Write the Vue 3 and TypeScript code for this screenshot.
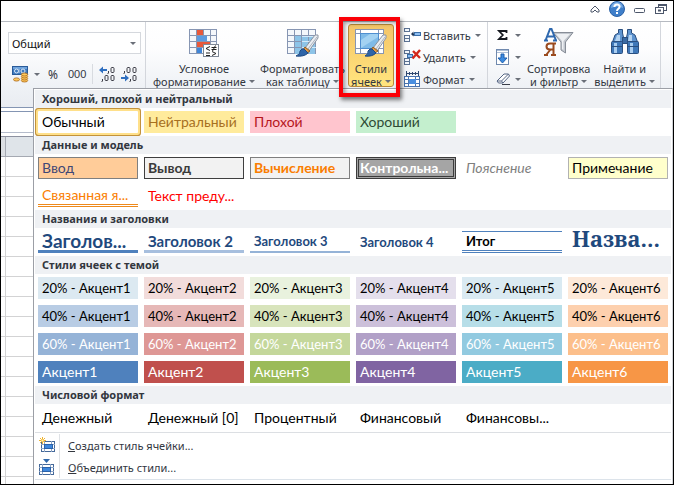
<script setup lang="ts">
interface StyleCell {
  label: string
  kind: string
}

interface StyleGroup {
  title: string
  cells: StyleCell[]
}

const accents = [1, 2, 3, 4, 5, 6]

const accentRow = (prefix: string, tint: string): StyleCell[] =>
  accents.map((n) => ({ label: `${prefix}Акцент${n}`, kind: `accent${n} ${tint}` }))

const groups: StyleGroup[] = [
  {
    title: 'Хороший, плохой и нейтральный',
    cells: [
      { label: 'Обычный', kind: 'selected' },
      { label: 'Нейтральный', kind: 'neutral' },
      { label: 'Плохой', kind: 'bad' },
      { label: 'Хороший', kind: 'good' },
    ],
  },
  {
    title: 'Данные и модель',
    cells: [
      { label: 'Ввод', kind: 'input' },
      { label: 'Вывод', kind: 'output' },
      { label: 'Вычисление', kind: 'calc' },
      { label: 'Контрольна...', kind: 'check' },
      { label: 'Пояснение', kind: 'explain' },
      { label: 'Примечание', kind: 'note' },
      { label: 'Связанная я...', kind: 'linked' },
      { label: 'Текст преду...', kind: 'warning' },
    ],
  },
  {
    title: 'Названия и заголовки',
    cells: [
      { label: 'Заголов...', kind: 'heading h1' },
      { label: 'Заголовок 2', kind: 'heading h2' },
      { label: 'Заголовок 3', kind: 'heading h3' },
      { label: 'Заголовок 4', kind: 'heading h4' },
      { label: 'Итог', kind: 'total' },
      { label: 'Назва...', kind: 'title' },
    ],
  },
  {
    title: 'Стили ячеек с темой',
    cells: [
      ...accentRow('20% - ', 'tint20'),
      ...accentRow('40% - ', 'tint40'),
      ...accentRow('60% - ', 'tint60'),
      ...accentRow('', 'tint100'),
    ],
  },
  {
    title: 'Числовой формат',
    cells: [
      { label: 'Денежный', kind: 'plain' },
      { label: 'Денежный [0]', kind: 'plain' },
      { label: 'Процентный', kind: 'plain' },
      { label: 'Финансовый', kind: 'plain' },
      { label: 'Финансовы...', kind: 'plain' },
    ],
  },
]
</script>

<template>
  <div class="window">
    <header class="titlebar">
      <button class="bare" aria-label="Свернуть ленту">
        <svg width="10" height="10" viewBox="0 0 10 10">
          <path d="M1 6 L5 2 L9 6 L9 8 H7 L5 6 L3 8 H1 Z" fill="#fff" stroke="#4c566a" />
        </svg>
      </button>
      <button class="bare" aria-label="Справка">
        <svg width="16" height="16" viewBox="0 0 16 16">
          <circle cx="8" cy="8" r="7.5" fill="#3f7fca" stroke="#2c62a6" />
          <path d="M2 7 A6 6 0 0 1 14 7 Q8 4 2 7Z" fill="#76aae4" />
          <path d="M5.4 6 C5.4 2.6 10.6 2.6 10.6 5.8 C10.6 7.8 8 7.8 8 10" fill="none" stroke="#fff" stroke-width="2" />
          <rect x="7" y="11" width="2" height="2" fill="#fff" />
        </svg>
      </button>
      <button class="bare" aria-label="Свернуть окно">
        <svg width="12" height="12" viewBox="0 0 12 12">
          <rect x="0.5" y="5.5" width="10" height="4" rx="1" fill="#fff" stroke="#4c566a" />
        </svg>
      </button>
      <button class="bare" aria-label="Восстановить окно">
        <svg width="12" height="12" viewBox="0 0 12 12" fill="#fff" stroke="#4c566a">
          <rect x="3.5" y="1.5" width="8" height="6" />
          <path d="M3 2.5 H12" />
          <rect x="0.5" y="4.5" width="8" height="6" />
          <rect x="3.5" y="7" width="2" height="1" />
        </svg>
      </button>
    </header>

    <div class="ribbon">
      <section class="group number" aria-label="Число">
        <div class="combo">
          <select aria-label="Числовой формат">
            <option>Общий</option>
          </select>
          <i class="caret"></i>
        </div>
        <div class="number-tools">
          <button class="bare money" aria-label="Финансовый формат">
            <svg width="17" height="17" viewBox="0 0 17 17">
              <rect x="0.5" y="0.5" width="15" height="8" fill="#3f79bd" stroke="#2a5b99" />
              <path d="M1 1 H15 V3 H1Z" fill="#6fa3dc" />
              <circle cx="4.5" cy="5" r="2" fill="none" stroke="#dce9f7" />
              <circle cx="11" cy="5" r="2" fill="none" stroke="#dce9f7" />
              <path d="M7 3 V7" stroke="#b9d2ee" />
              <g fill="#ffc95c" stroke="#a9661b" stroke-width="0.8">
                <ellipse cx="4.5" cy="13.5" rx="3" ry="1.6" />
                <ellipse cx="12.5" cy="14.5" rx="3.2" ry="1.5" />
                <ellipse cx="12.5" cy="12.5" rx="3.2" ry="1.5" />
                <ellipse cx="12.5" cy="10.5" rx="3.2" ry="1.5" />
                <ellipse cx="12.5" cy="8.5" rx="3.2" ry="1.5" />
              </g>
            </svg>
            <i class="caret"></i>
          </button>
          <button class="bare sym">%</button>
          <button class="bare sym narrow">000</button>
          <span class="tool-rule"></span>
          <button class="bare" aria-label="Увеличить разрядность">
            <svg width="16" height="16" viewBox="0 0 16 16" fill="none">
              <path d="M0 4 L4 0.5 V3 H8 V5 H4 V7.5Z" fill="#2f6fc0" />
              <rect x="12" y="1.5" width="3" height="5" rx="1" stroke="#3c3c46" />
              <path d="M9.5 5 V7 L8.5 8 M3.5 13 V15 L2.5 16" stroke="#3c3c46" />
              <rect x="6" y="9.5" width="3" height="5" rx="1" stroke="#3c3c46" />
              <rect x="12" y="9.5" width="3" height="5" rx="1" stroke="#3c3c46" />
            </svg>
          </button>
          <button class="bare" aria-label="Уменьшить разрядность">
            <svg width="16" height="16" viewBox="0 0 16 16" fill="none">
              <path d="M8 12 L4 8.5 V11 H0 V13 H4 V15.5Z" fill="#2f6fc0" />
              <rect x="6" y="1.5" width="3" height="5" rx="1" stroke="#3c3c46" />
              <rect x="12" y="1.5" width="3" height="5" rx="1" stroke="#3c3c46" />
              <path d="M3.5 5 V7 L2.5 8 M9.5 13 V15 L8.5 16" stroke="#3c3c46" />
              <rect x="12" y="9.5" width="3" height="5" rx="1" stroke="#3c3c46" />
            </svg>
          </button>
        </div>
      </section>

      <section class="group styles" aria-label="Стили">
        <button class="big">
          <svg width="30" height="30" viewBox="0 0 30 30">
            <rect x="0.5" y="1.5" width="27" height="24" fill="#f4f7fb" stroke="#8796b3" />
            <rect x="7" y="2" width="7" height="6" fill="#e8583a" />
            <rect x="7" y="8" width="11" height="6" fill="#5b9be0" />
            <rect x="7" y="14" width="14" height="6" fill="#e8583a" />
            <rect x="7" y="20" width="6" height="5" fill="#3f86d8" />
            <path d="M7.5 1 V26 M14.5 1 V7 M21.5 1 V26 M0 7.5 H28 M0 13.5 H28 M0 19.5 H28" stroke="#8796b3" fill="none" />
            <rect x="14.5" y="16.5" width="15" height="12" fill="#fff" stroke="#7f8896" />
            <path d="M21 18.5 L17 20.5 L21 22.5 M17 25 H21 M22.5 19.5 H27.5 M22.5 21.5 H27.5 M26.5 17.5 L23.5 23 M23 23.5 L27 25.5 L23 27.5 M17 27.5 H21" stroke="#222" fill="none" />
          </svg>
          <span>Условное</span>
          <span class="with-caret">форматирование<i class="caret"></i></span>
        </button>
        <button class="big">
          <svg width="32" height="30" viewBox="0 0 32 30">
            <rect x="0.5" y="1.5" width="28" height="24" fill="#f4f7fb" stroke="#8796b3" />
            <rect x="8" y="8" width="20" height="18" fill="#8dc4e8" />
            <path d="M7.5 1 V26 M14.5 1 V26 M21.5 1 V26 M0 7.5 H29 M0 13.5 H29 M0 19.5 H29" stroke="#8796b3" fill="none" />
            <path d="M15 8.5 H29 M15 13.5 H29 M15 19.5 H29" stroke="#d3eafa" />
            <path d="M31 7 L28 7 L18 20 L22 23 L31 10Z" fill="#e9edf2" stroke="#8b93a0" />
            <path d="M30 9 L21 21" stroke="#a9b1bd" />
            <path d="M18 19 L23 23 L20 25 L16 22Z" fill="#e39a45" stroke="#8c5a22" />
            <path d="M17 21 L21 25 Q17 29 9 28 Q14 26 13 23 Q15 20 17 21Z" fill="#2e64a8" stroke="#1f4a82" />
          </svg>
          <span>Форматировать</span>
          <span class="with-caret">как таблицу<i class="caret"></i></span>
        </button>
        <button class="big active">
          <svg width="32" height="30" viewBox="0 0 32 30">
            <rect x="0.5" y="1.5" width="28" height="24" fill="#fff" stroke="#8796b3" />
            <path d="M5.5 1 V26 M23.5 1 V26 M0 5.5 H29 M0 20.5 H29" stroke="#8796b3" />
            <rect x="5.5" y="5.5" width="18" height="15" fill="#7fbbe8" stroke="#4f8fd0" />
            <path d="M6 20 V12 L15 6 H23 V9Z" fill="#a3d2f2" />
            <path d="M31 7 L28 7 L18 20 L22 23 L31 10Z" fill="#e9edf2" stroke="#8b93a0" />
            <path d="M30 9 L21 21" stroke="#a9b1bd" />
            <path d="M18 19 L23 23 L20 25 L16 22Z" fill="#e39a45" stroke="#8c5a22" />
            <path d="M17 21 L21 25 Q17 29 10 28 Q14 26 13 23 Q15 20 17 21Z" fill="#2e64a8" stroke="#1f4a82" />
          </svg>
          <span>Стили</span>
          <span class="with-caret">ячеек<i class="caret"></i></span>
        </button>
      </section>

      <section class="group cells-group" aria-label="Ячейки">
        <button class="small">
          <svg width="17" height="16" viewBox="0 0 17 16">
            <g fill="#f4f8fd" stroke="#5c7294">
              <rect x="0.5" y="1.5" width="5" height="3" />
              <rect x="0.5" y="8.5" width="5" height="3" />
              <rect x="0.5" y="11.5" width="5" height="3" />
            </g>
            <path d="M7 7 L9.5 4.5 V6.5 H12 V8.5 H9.5 V9.5Z" fill="#1d3557" />
            <rect x="10.5" y="5.5" width="6" height="3" fill="#8dbdf0" stroke="#3a6ea8" />
          </svg>
          Вставить<i class="caret"></i>
        </button>
        <button class="small">
          <svg width="17" height="16" viewBox="0 0 17 16">
            <g fill="#f4f8fd" stroke="#5c7294">
              <rect x="0.5" y="1.5" width="5" height="3" />
              <rect x="0.5" y="9.5" width="5" height="3" />
              <rect x="0.5" y="12.5" width="5" height="3" />
              <rect x="3.5" y="5.5" width="5" height="3" fill="#8dbdf0" stroke="#3a6ea8" />
            </g>
            <path d="M9 2 L16 9 M16 1 L8.5 9.5" stroke="#d3281c" stroke-width="2.4" fill="none" />
          </svg>
          Удалить<i class="caret"></i>
        </button>
        <button class="small">
          <svg width="17" height="16" viewBox="0 0 17 16">
            <path d="M2 2.5 H15 M2.5 0 V5 M14.5 0 V5 M5.5 1 V4 M8.5 1 V4 M11.5 1 V4" stroke="#2f4870" fill="none" />
            <rect x="0.5" y="5.5" width="15" height="10" fill="#fff" stroke="#4a74b0" />
            <path d="M4.5 5 V16 M11.5 5 V16 M0 8.5 H16 M0 12.5 H16" stroke="#4a74b0" fill="none" />
            <rect x="5" y="8" width="7" height="5" fill="#4b8fe0" />
          </svg>
          Формат<i class="caret"></i>
        </button>
      </section>

      <section class="group editing" aria-label="Редактирование">
        <div class="edit-stack">
          <button class="bare" aria-label="Сумма">
            <svg width="15" height="14" viewBox="0 0 15 14">
              <path d="M10.5 5 V3 H3 L6.8 7 L3 11 H10.5 V9" fill="none" stroke="#15181f" stroke-width="1.8" />
            </svg>
            <i class="caret"></i>
          </button>
          <button class="bare" aria-label="Заполнить">
            <svg width="15" height="16" viewBox="0 0 15 16">
              <rect x="0.5" y="0.5" width="12" height="15" fill="#fff" stroke="#7089ae" />
              <path d="M1 1.5 H12 M1 3.5 H12" stroke="#aebfd8" />
              <path d="M5 5 H8 V9 H11 L6.5 14 L2 9 H5Z" fill="#3c8be0" stroke="#1f5fae" />
            </svg>
            <i class="caret"></i>
          </button>
          <button class="bare" aria-label="Очистить">
            <svg width="15" height="14" viewBox="0 0 15 14">
              <path d="M1 9 L8 2 H12.5 L13.5 4 L7 11 H2.5Z" fill="#fff" stroke="#566684" />
              <path d="M1 9 H5.5 L7 11 M5.5 9 L12.5 2" fill="none" stroke="#566684" />
              <path d="M6 12.5 H14" stroke="#3a3f4a" />
            </svg>
            <i class="caret"></i>
          </button>
        </div>
        <button class="big">
          <svg width="30" height="30" viewBox="0 0 30 30">
            <path d="M9 4.5 H29 L21.5 14 V25 L17 22 V14Z" fill="#c2c7ce" stroke="#878d97" />
            <path d="M12 6 H26 L19.5 13 V22 L18 21 V13Z" fill="#eef0f3" />
            <path d="M1.5 12.5 L6 1 H7.5 L12 12.5 M3.5 8.5 H10 M0 12.5 H4 M9 12.5 H13" fill="none" stroke="#2e68ae" stroke-width="2" />
            <path d="M9.5 27 V15.5 H6 Q2.5 15.5 2.5 18.5 Q2.5 21.5 6 21.5 H9.5 M6.5 21.5 L2.5 26.5 M0 27 H4 M7 27 H12 M8 15.5 H12" fill="none" stroke="#9a4a1e" stroke-width="2" />
          </svg>
          <span>Сортировка</span>
          <span class="with-caret">и фильтр<i class="caret"></i></span>
        </button>
        <button class="big">
          <svg width="28" height="30" viewBox="0 0 28 30">
            <g stroke="#2a4f80">
              <path d="M7.5 1.5 H11.5 V5 L13.5 14 H1.5 L4 7 L7.5 5Z" fill="#5e93cf" />
              <path d="M16.5 1.5 H20.5 V5 L24 7 L26.5 14 H14.5 L16.5 5Z" fill="#5e93cf" />
              <rect x="11.5" y="9.5" width="5" height="6" fill="#3a6aa4" />
              <rect x="0.5" y="13.5" width="11" height="12" rx="1" fill="#3f78b9" />
              <rect x="16.5" y="13.5" width="11" height="12" rx="1" fill="#3f78b9" />
            </g>
            <path d="M3 15 H6 V25 H3Z M19 15 H22 V25 H19Z" fill="#a9cdf0" />
            <path d="M6 7 H9 V13 H4Z M18 7 H21 V13 H17Z" fill="#b5d4f2" />
            <path d="M1 18.5 H11 M17 18.5 H27" stroke="#2a4f80" />
          </svg>
          <span>Найти и</span>
          <span class="with-caret">выделить<i class="caret"></i></span>
        </button>
      </section>
    </div>

    <div class="workspace">
      <div class="sheet-edge">
        <div class="ribbon-foot"></div>
        <div class="formula-bar"></div>
        <div class="column-head"></div>
        <div class="grid-rows"></div>
      </div>

      <main class="gallery">
        <section v-for="group in groups" :key="group.title">
          <h2>{{ group.title }}</h2>
          <div class="cells">
            <button v-for="cell in group.cells" :key="cell.label" class="cell" :class="cell.kind">
              {{ cell.label }}
            </button>
          </div>
        </section>
        <nav class="menu">
          <button class="menu-item">
            <span class="menu-icon">
              <svg width="17" height="16" viewBox="0 0 17 16">
                <rect x="2.5" y="4.5" width="13" height="10" fill="#fff" stroke="#45699a" />
                <path d="M5.5 4 V15 M12.5 4 V15 M2 7.5 H16 M2 11.5 H16" stroke="#8fa6c6" fill="none" />
                <rect x="5.5" y="7.5" width="8" height="4" fill="#3e87dc" stroke="#2c62a8" />
                <path d="M3.5 0 V7 M0 3.5 H7 M1 1 L6 6 M6 1 L1 6" stroke="#f0b22e" fill="none" />
                <rect x="2.5" y="2.5" width="2" height="2" fill="#fff2b0" />
              </svg>
            </span>
            <span class="menu-label"><u>С</u>оздать стиль ячейки...</span>
          </button>
          <button class="menu-item">
            <span class="menu-icon">
              <svg width="17" height="16" viewBox="0 0 17 16">
                <path d="M4 0 H11 L7.5 4Z" fill="#2f67ab" />
                <rect x="0.5" y="5.5" width="14" height="10" fill="#fff" stroke="#45699a" />
                <path d="M3.5 5 V16 M11.5 5 V16 M0 8.5 H15 M0 12.5 H15" stroke="#8fa6c6" fill="none" />
                <rect x="3.5" y="8.5" width="8" height="4" fill="#3e87dc" stroke="#2c62a8" />
              </svg>
            </span>
            <span class="menu-label"><u>О</u>бъединить стили...</span>
          </button>
        </nav>
      </main>
    </div>
  </div>
</template>

<style>
body {
  margin: 0;
}
</style>

<style scoped>
.window {
  box-sizing: border-box;
  min-height: 100vh;
  border: 1px solid #000;
  display: flex;
  flex-direction: column;
  background: #fff;
  font-family: "Noto Sans", "Open Sans", sans-serif;
  font-size: 11px;
  line-height: 13px;
  color: #33373f;
  overflow: hidden;
}

button {
  font: inherit;
  color: inherit;
  border: 0;
  padding: 0;
  background: none;
  white-space: nowrap;
}

svg {
  display: block;
  flex: none;
}

.bare {
  display: flex;
  align-items: center;
}

.caret {
  flex: none;
  width: 0;
  height: 0;
  border: 3px solid transparent;
  border-top-color: #6a6f78;
  border-bottom-width: 0;
}

.titlebar {
  height: 20px;
  display: flex;
  align-items: center;
  justify-content: flex-end;
  gap: 9px;
  padding: 0 6px 4px 0;
  box-sizing: border-box;
}

.ribbon {
  display: flex;
  box-sizing: border-box;
  height: 67px;
  border-top: 1px solid #b6bac1;
  background: linear-gradient(#fff, #fdfdfe 40%, #eef1f5);
}

.group {
  display: flex;
  box-sizing: border-box;
}

.group.number {
  flex: none;
  width: 145px;
  flex-direction: column;
  gap: 10px;
  padding: 10px 4px 0 7px;
  border-right: 1px solid #d3d6dc;
}

.combo {
  position: relative;
  display: flex;
}

.combo select {
  appearance: none;
  width: 100%;
  height: 22px;
  padding: 0 3px;
  border: 1px solid #d5d8dd;
  border-radius: 0;
  background: #fff;
  color: #111;
  font: inherit;
}

.combo .caret {
  position: absolute;
  right: 5px;
  top: 10px;
  pointer-events: none;
}

.number-tools {
  display: flex;
  align-items: center;
  gap: 6px;
  padding-left: 4px;
}

.money {
  gap: 5px;
}

.sym {
  font-size: 12px;
  margin-left: 2px;
}

.narrow {
  font-family: "Liberation Sans", sans-serif;
  font-size: 11px;
  margin-left: 4px;
}

.tool-rule {
  width: 1px;
  height: 20px;
  background: #d8dbe0;
}

.styles {
  flex: none;
  gap: 1px;
  padding-left: 5px;
}

.big {
  display: flex;
  flex-direction: column;
  align-items: center;
  box-sizing: border-box;
  height: 65px;
  padding: 6px 2px 0;
}

.big svg {
  margin-bottom: 4px;
}

.with-caret {
  display: flex;
  align-items: center;
  gap: 3px;
}

.big.active {
  position: relative;
  z-index: 2;
  margin-top: 2px;
  height: 63px;
  padding: 3px 2px 0;
  border: 1px solid #b98a3a;
  border-radius: 3px;
  background: linear-gradient(#f3c468, #fbd573 50%, #ffe47e);
}

.big.active::after {
  content: "";
  position: absolute;
  inset: -8px -7px -11px -10px;
  border: 4px solid #fb0007;
  box-shadow: 2px 3px 4px #00000080, inset 2px 2px 4px #00000060;
  pointer-events: none;
}

.cells-group {
  flex-direction: column;
  gap: 6px;
  padding: 5px 0 0 10px;
  flex: 1;
  border-right: 1px solid #d3d6dc;
}

.small {
  display: flex;
  align-items: center;
  gap: 2px;
}

.small .caret {
  margin-left: 2px;
}

.editing {
  flex: none;
  margin-right: 12px;
  padding: 0 3px 0 8px;
  border-right: 1px solid #d3d6dc;
}

.edit-stack {
  display: flex;
  flex-direction: column;
  gap: 7px;
  padding: 6px 4px 0 0;
}

.edit-stack .bare {
  gap: 4px;
}

.workspace {
  flex: 1;
  display: flex;
}

.sheet-edge {
  width: 32px;
  flex: none;
  display: flex;
  flex-direction: column;
}

.ribbon-foot {
  height: 19px;
  background: linear-gradient(#eef1f5, #e9ecf1);
  border-bottom: 1px solid #8495b3;
}

.formula-bar {
  height: 20px;
  margin: 3px 0;
  border-top: 1px solid #8495b3;
  border-bottom: 1px solid #b5bccb;
}

.column-head {
  height: 19px;
  border-top: 1px solid #8d91a0;
  border-bottom: 1px solid #a5a9b2;
  background: linear-gradient(90deg, #dcdfe3 4px, #a5a9b2 4px, #a5a9b2 5px, #dfe4e9 5px);
}

.grid-rows {
  flex: 1;
  background:
    linear-gradient(90deg, transparent 4px, #d3d3d4 4px, #d3d3d4 5px, transparent 5px),
    repeating-linear-gradient(#fff 0, #fff 19px, #d3d3d4 19px, #d3d3d4 20px);
}

.gallery {
  flex: 1;
  min-width: 0;
  box-sizing: border-box;
  border: 1px solid #9c9fa6;
  border-right-color: #d0d2d6;
  border-bottom: 0;
  padding: 1px 1px 0;
  background: #fff;
}

h2 {
  margin: 0;
  height: 18px;
  padding-left: 7px;
  background: #eff1f4;
  font-size: 11px;
  line-height: 18px;
  font-weight: 700;
  color: #33373f;
}

.cells {
  display: grid;
  grid-template-columns: repeat(6, minmax(0, 1fr));
  gap: 6px;
  padding: 3px;
}

.cell {
  display: flex;
  align-items: center;
  height: 22px;
  box-sizing: border-box;
  padding: 0 4px;
  font-family: Lato, "Noto Sans", sans-serif;
  font-size: 14px;
  line-height: 18px;
  color: #000;
}

.selected {
  background: #fff;
  border-radius: 1px;
  box-shadow: 0 0 0 2px #ffe08a, 0 0 0 3px #c2923c;
}

.neutral { background: #ffeb9c; color: #a7701f; }
.bad { background: #ffc5ce; color: #b5161c; }
.good { background: #c4efce; color: #2f4b35; }

.input,
.output,
.calc,
.note {
  border: 1px solid #7f7f7f;
  padding: 0 3px;
}

.input { background: #ffcc99; color: #3f4776; }
.output { background: #f2f2f2; border-color: #3f3f3f; color: #3a3a3a; font-weight: 700; }
.calc { background: #f2f2f2; color: #fa7d00; font-weight: 700; }

.check {
  padding: 0 1px;
  border: 3px double #3c3c3c;
  background: #a5a5a5;
  color: #fff;
  font-weight: 700;
}

.explain { color: #7f7f7f; font-style: italic; }
.note { background: #ffffcc; border-color: #b2b2b2; }
.linked { color: #fa7d00; border-bottom: 3px double #ee8a1c; }
.warning { color: #f00; }

.heading {
  color: #1f497d;
  font-weight: 700;
}

.h1 { font-size: 19px; border-bottom: 3px solid #4f81bd; }
.h2 { font-size: 15px; border-bottom: 3px solid #a7bfde; }
.h3 { font-size: 13px; border-bottom: 2px solid #95b3d7; }
.h4 { font-size: 13px; }

.total {
  font-size: 13px;
  font-weight: 700;
  border-top: 1px solid #4f81bd;
  border-bottom: 3px double #4f81bd;
}

.title {
  padding-bottom: 8px;
  font-family: "Noto Serif", "DejaVu Serif", "Liberation Serif", serif;
  font-size: 22px;
  font-weight: 700;
  color: #1f497d;
}

.accent1 { --c20: #dce9f1; --c40: #b8cce4; --c60: #95b3d7; --c100: #4f81bd; }
.accent2 { --c20: #f2dcdb; --c40: #e6b8b7; --c60: #de9795; --c100: #c0504d; }
.accent3 { --c20: #e9f2de; --c40: #d8e4bc; --c60: #c4d79b; --c100: #9bbb59; }
.accent4 { --c20: #e4dfec; --c40: #ccc0da; --c60: #b1a0c7; --c100: #8064a2; }
.accent5 { --c20: #daeaf2; --c40: #b7dee8; --c60: #92cae0; --c100: #4bacc6; }
.accent6 { --c20: #fde9d9; --c40: #fdd0ae; --c60: #fcbf8b; --c100: #f79646; }

.tint20,
.tint40,
.tint60 {
  font-size: 13px;
}

.tint20 { background: var(--c20); }
.tint40 { background: var(--c40); }
.tint60 { background: var(--c60); color: #fff; }
.tint100 { background: var(--c100); color: #fff; }

.menu {
  border-top: 1px solid #dcdfe3;
  border-bottom: 1px solid #dce3ea;
  padding: 1px 0;
}

.menu-item {
  display: flex;
  align-items: center;
  width: 100%;
  height: 22px;
  text-align: left;
}

.menu-icon {
  display: flex;
  align-items: center;
  width: 20px;
  height: 22px;
  padding-left: 4px;
  border-right: 1px solid #dfe2e6;
}

.menu-label {
  padding-left: 8px;
}
</style>
